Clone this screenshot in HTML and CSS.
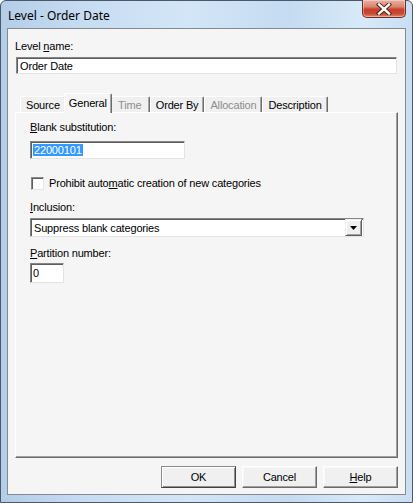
FILE: index.html
```html
<!DOCTYPE html>
<html>
<head>
<meta charset="utf-8">
<link rel="stylesheet" href="styles.css">
</head>
<body>
<div class="window">
  <div class="titlebar">
    <span class="title">Level - Order Date</span>
    <div class="close">
      <svg width="16" height="12" viewBox="0 0 16 12">
        <path d="M3 1.5 L13 10.5 M13 1.5 L3 10.5" stroke="#3d1d17" stroke-width="4.2" stroke-linecap="square"/>
        <path d="M3 1.5 L13 10.5 M13 1.5 L3 10.5" stroke="#ffffff" stroke-width="2.4" stroke-linecap="square"/>
      </svg>
    </div>
  </div>
  <div class="client">
    <div class="lbl first">Level <u>n</u>ame:</div>
    <div class="field name">Order Date</div>
    <div class="tabs">
      <div class="tab">Source</div>
      <div class="tab active">General</div>
      <div class="tab disabled">Time</div>
      <div class="tab">Order By</div>
      <div class="tab disabled">Allocation</div>
      <div class="tab">Description</div>
    </div>
    <div class="panel">
      <div class="lbl"><u>B</u>lank substitution:</div>
      <div class="field blank"><span class="sel">22000101</span></div>
      <div class="check-row">
        <span class="checkbox"></span>
        <span class="check-text">Prohibit auto<u>m</u>atic creation of new categories</span>
      </div>
      <div class="lbl incl"><u>I</u>nclusion:</div>
      <div class="field select">
        <span class="sel-text">Suppress blank categories</span>
        <span class="drop">
          <svg width="7" height="4" viewBox="0 0 7 4"><path d="M0 0 H7 L3.5 4 Z" fill="#000"/></svg>
        </span>
      </div>
      <div class="lbl part"><u>P</u>artition number:</div>
      <div class="field partition">0</div>
    </div>
    <div class="buttons">
      <div class="btn default">OK</div>
      <div class="btn">Cancel</div>
      <div class="btn"><u>H</u>elp</div>
    </div>
  </div>
</div>
</body>
</html>
```

FILE: styles.css
```css
html, body {
  margin: 0;
  padding: 0;
}
body {
  width: 413px;
  height: 503px;
  overflow: hidden;
  background: #ffffff;
  font-family: "Liberation Sans", Arial, sans-serif;
  font-size: 11px;
  letter-spacing: -0.17px;
  color: #000;
}
u { text-decoration: underline; text-underline-offset: 1px; }

.window {
  width: 413px;
  height: 503px;
  box-sizing: border-box;
  border: 1px solid #4a5868;
  border-radius: 6px 6px 0 0;
  background: linear-gradient(90deg, #b4cde8 0%, #c6dcf2 20%, #d3e6f8 45%, #c4dbf1 70%, #d8eaf9 88%, #c9def3 100%);
  padding: 0 6px 7px 6px;
  display: flex;
  flex-direction: column;
}

.titlebar {
  height: 27px;
  display: flex;
  align-items: flex-start;
  justify-content: space-between;
  flex-shrink: 0;
}
.title {
  font-family: "Noto Sans", "Open Sans", sans-serif;
  font-size: 12px;
  letter-spacing: 0;
  color: #000;
  margin-top: 8px;
  margin-left: 1px;
  line-height: 14px;
}
.close {
  width: 44px;
  height: 18px;
  margin-top: -1px;
  box-sizing: border-box;
  border: 1px solid #6e2e25;
  border-top: none;
  border-radius: 0 0 5px 5px;
  background: linear-gradient(180deg, #eab0a2 0%, #d98370 40%, #c6402a 55%, #c84a32 80%, #e08a6a 100%);
  box-shadow: inset 0 0 0 1px rgba(255,255,255,0.35);
  display: flex;
  align-items: center;
  justify-content: center;
}

.client {
  flex: 1;
  background: #f5f5f5;
  border: 1px solid #868a8e;
  padding: 0 7px;
  display: flex;
  flex-direction: column;
}

.lbl {
  line-height: 13px;
  height: 13px;
  white-space: nowrap;
}
.lbl.first { margin-top: 11px; }

.field {
  background: #fff;
  box-sizing: border-box;
  border: 1px solid;
  border-color: #858585 #e3e3e3 #e3e3e3 #858585;
  box-shadow: inset 1px 1px 0 #5e5e5e;
  line-height: 14px;
  padding: 0 3px;
  white-space: nowrap;
}
.field.name {
  margin-top: 4px;
  margin-left: 1px;
  width: 381px;
  height: 17px;
  padding-top: 1px;
}

.tabs {
  margin-top: 19px;
  height: 19px;
  display: flex;
  align-items: flex-end;
  padding-left: 5px;
  position: relative;
  z-index: 1;
}
.tab {
  height: 16px;
  min-width: 40px;
  box-sizing: border-box;
  padding: 1px 5px 0 5px;
  line-height: 14px;
  text-align: center;
  border-top: 1px solid #fff;
  border-left: 1px solid #fff;
  border-right: 1px solid #6c6c6c;
  box-shadow: inset -1px 0 0 #a8a8a8;
  border-radius: 2px 2px 0 0;
  background: #f0f0f0;
  white-space: nowrap;
}
.tab.disabled { color: #8d8d8d; }
.tab.active {
  height: 20px;
  margin: 0 -2px -1px -2px;
  padding: 2px 4px 0 4px;
  background: #f5f5f5;
  position: relative;
  z-index: 2;
}

.panel {
  width: 383px;
  height: 346px;
  box-sizing: border-box;
  border-top: 1px solid #fff;
  border-left: 1px solid #fff;
  border-right: 1px solid #6a6a6a;
  border-bottom: 1px solid #6a6a6a;
  box-shadow: inset -1px -1px 0 #a0a0a0;
  padding: 8px 14px 0 14px;
  display: flex;
  flex-direction: column;
  align-items: flex-start;
}
.field.blank {
  margin-top: 7px;
  width: 155px;
  height: 18px;
  padding: 1px 2px 0 2px;
}
.sel {
  background: #3399ff;
  color: #fff;
  padding: 0 1px;
}

.check-row {
  margin-top: 18px;
  margin-left: 1px;
  display: flex;
  align-items: center;
  gap: 5px;
  height: 13px;
}
.checkbox {
  width: 13px;
  height: 13px;
  box-sizing: border-box;
  background: #fff;
  border: 1px solid;
  border-color: #8a8a8a #e6e6e6 #e6e6e6 #8a8a8a;
  box-shadow: inset 1px 1px 0 #5e5e5e;
}
.check-text { line-height: 13px; }

.lbl.incl { margin-top: 11px; }
.field.select {
  margin-top: 4px;
  width: 334px;
  height: 19px;
  display: flex;
  align-items: center;
  justify-content: space-between;
  padding: 0 1px 0 3px;
}
.sel-text { line-height: 14px; }
.drop {
  width: 17px;
  height: 17px;
  box-sizing: border-box;
  background: #f0f0f0;
  border: 1px solid;
  border-color: #f0f0f0 #5e5e5e #5e5e5e #f0f0f0;
  box-shadow: inset 1px 1px 0 #fff, inset -1px -1px 0 #a0a0a0;
  display: flex;
  align-items: center;
  justify-content: center;
}
.lbl.part { margin-top: 10px; }
.field.partition {
  margin-top: 3px;
  width: 34px;
  height: 20px;
  padding: 2px 2px 0 2px;
}

.buttons {
  margin-top: 8px;
  display: flex;
  justify-content: flex-end;
  gap: 6px;
  width: 383px;
}
.btn {
  width: 75px;
  height: 22px;
  box-sizing: border-box;
  background: #f0f0f0;
  border: 1px solid;
  border-color: #fff #6a6a6a #6a6a6a #fff;
  box-shadow: inset -1px -1px 0 #a0a0a0, inset 1px 1px 0 #f8f8f8;
  display: flex;
  align-items: center;
  justify-content: center;
}
.btn.default {
  border-color: #8a8a8a #404040 #404040 #8a8a8a;
  box-shadow: inset 1px 1px 0 #fff, inset -1px -1px 0 #909090;
}
```
